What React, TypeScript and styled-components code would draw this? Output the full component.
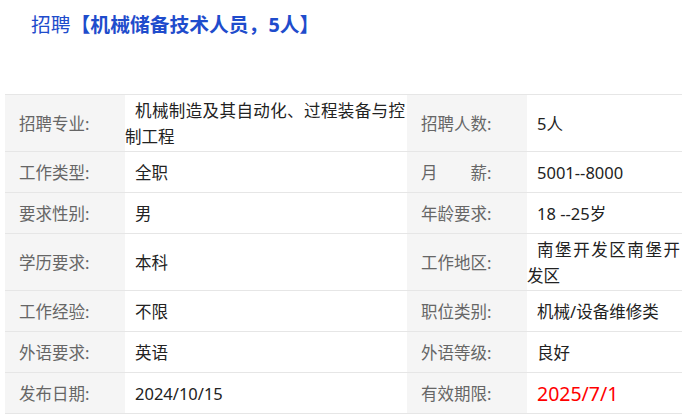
import React from "react";
import styled, { createGlobalStyle } from "styled-components";

const GlobalStyle = createGlobalStyle`
  html, body { margin: 0; padding: 0; background: #fff; }
  body { font-family: "Noto Sans", "Noto Sans CJK SC", sans-serif; }
`;

const Page = styled.div`
  padding: 12px 0 0 5px;
  width: 677px;
`;

const Title = styled.h1`
  margin: 0 0 56px 26px;
  font-size: 19.8px;
  line-height: 26px;
  font-weight: 400;
  color: #1f4ccc;
`;

const TitleStrong = styled.strong`
  font-weight: 700;
`;

const Grid = styled.div`
  display: grid;
  grid-template-columns: 120px 282px 120px 155px;
  border-bottom: 1px solid #e6e6e6;
`;

const Cell = styled.div`
  box-sizing: border-box;
  display: flex;
  align-items: center;
  min-height: 41px;
  padding: 3px 0 1px;
  border-top: 1px solid #e6e6e6;
  font-size: 16.5px;
  line-height: 26px;
`;

const Label = styled(Cell)`
  background: #f5f5f5;
  color: #666;
  padding-left: 14px;
  white-space: pre;
`;

const Value = styled(Cell)`
  color: #222;
  padding-right: 2px;
`;

const ValueText = styled.span<{ $red?: boolean }>`
  display: block;
  text-indent: 10px;
  text-align: justify;
  ${(p) => (p.$red ? "color: #ff0000; font-size: 19.5px;" : "")}
`;

type Item = { label: string; value: string; red?: boolean };

const rows: [Item, Item][] = [
  [
    { label: "招聘专业:", value: "机械制造及其自动化、过程装备与控制工程" },
    { label: "招聘人数:", value: "5人" },
  ],
  [
    { label: "工作类型:", value: "全职" },
    { label: "月\u3000\u3000薪:", value: "5001--8000" },
  ],
  [
    { label: "要求性别:", value: "男" },
    { label: "年龄要求:", value: "18 --25岁" },
  ],
  [
    { label: "学历要求:", value: "本科" },
    { label: "工作地区:", value: "南堡开发区南堡开发区" },
  ],
  [
    { label: "工作经验:", value: "不限" },
    { label: "职位类别:", value: "机械/设备维修类" },
  ],
  [
    { label: "外语要求:", value: "英语" },
    { label: "外语等级:", value: "良好" },
  ],
  [
    { label: "发布日期:", value: "2024/10/15" },
    { label: "有效期限:", value: "2025/7/1", red: true },
  ],
];

export default function App() {
  return (
    <>
      <GlobalStyle />
      <Page>
        <Title>
          招聘<TitleStrong>【机械储备技术人员，5人】</TitleStrong>
        </Title>
        <Grid>
          {rows.map((pair, i) =>
            pair.map((item, j) => (
              <React.Fragment key={`${i}-${j}`}>
                <Label>{item.label}</Label>
                <Value>
                  <ValueText $red={item.red}>{item.value}</ValueText>
                </Value>
              </React.Fragment>
            ))
          )}
        </Grid>
      </Page>
    </>
  );
}
